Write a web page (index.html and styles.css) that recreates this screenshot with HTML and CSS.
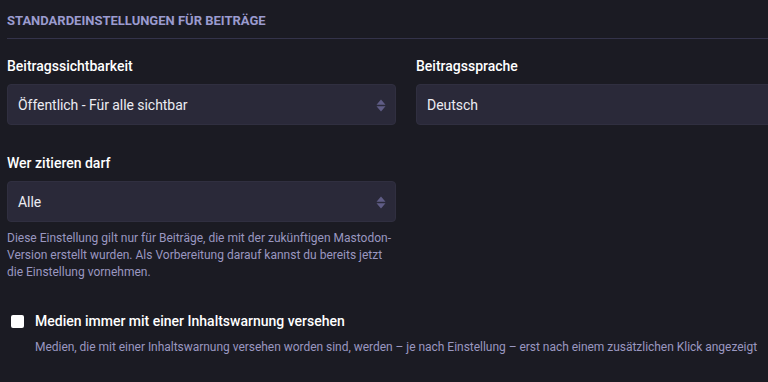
FILE: index.html
```
<!DOCTYPE html>
<html lang="de">
<head>
<meta charset="utf-8">
<link rel="stylesheet" href="styles.css">
</head>
<body>
<div class="page">
  <h4 class="section-title">Standardeinstellungen für Beiträge</h4>
  <div class="fields-row">
    <div class="field">
      <label class="field-label">Beitragssichtbarkeit</label>
      <div class="select">
        <span class="select-value">Öffentlich - Für alle sichtbar</span>
        <svg class="select-arrows" width="10" height="13" viewBox="0 0 10 13"><path d="M5 0.5 L9.5 5.7 H0.5 Z M5 12.5 L9.5 7.3 H0.5 Z" fill="#5f5c85"/></svg>
      </div>
    </div>
    <div class="field">
      <label class="field-label">Beitragssprache</label>
      <div class="select">
        <span class="select-value">Deutsch</span>
        <svg class="select-arrows" width="10" height="13" viewBox="0 0 10 13"><path d="M5 0.5 L9.5 5.7 H0.5 Z M5 12.5 L9.5 7.3 H0.5 Z" fill="#5f5c85"/></svg>
      </div>
    </div>
  </div>
  <div class="fields-row second">
    <div class="field">
      <label class="field-label">Wer zitieren darf</label>
      <div class="select">
        <span class="select-value">Alle</span>
        <svg class="select-arrows" width="10" height="13" viewBox="0 0 10 13"><path d="M5 0.5 L9.5 5.7 H0.5 Z M5 12.5 L9.5 7.3 H0.5 Z" fill="#5f5c85"/></svg>
      </div>
      <p class="hint">Diese Einstellung gilt nur für Beiträge, die mit der zukünftigen Mastodon-Version erstellt wurden. Als Vorbereitung darauf kannst du bereits jetzt die Einstellung vornehmen.</p>
    </div>
    <div class="field"></div>
  </div>
  <div class="check-field">
    <div class="check-line">
      <span class="checkbox"></span>
      <span class="check-label">Medien immer mit einer Inhaltswarnung versehen</span>
    </div>
    <p class="check-hint">Medien, die mit einer Inhaltswarnung versehen worden sind, werden – je nach Einstellung – erst nach einem zusätzlichen Klick angezeigt</p>
  </div>
</div>
</body>
</html>
```
FILE: styles.css
```
html, body {
  margin: 0;
  padding: 0;
  background: #1b1b23;
  overflow: hidden;
}
body {
  font-family: Roboto, "Liberation Sans", sans-serif;
  color: #ffffff;
}
.page {
  width: 798px;
  padding: 12px 0 0 7px;
}
.section-title {
  margin: 0;
  font-size: 13px;
  line-height: 18px;
  font-weight: 700;
  text-transform: uppercase;
  color: #9b9bcf;
  padding-bottom: 8px;
  border-bottom: 1px solid #34334a;
}
.fields-row {
  display: flex;
  gap: 20px;
  margin-top: 17px;
}
.fields-row.second {
  margin-top: 28px;
}
.field {
  flex: 0 0 389px;
  width: 389px;
}
.field-label {
  display: block;
  font-size: 14px;
  line-height: 20px;
  font-weight: 500;
  color: #ffffff;
  margin-bottom: 8px;
}
.select {
  box-sizing: border-box;
  height: 41px;
  display: flex;
  align-items: center;
  justify-content: space-between;
  padding: 0 9px 0 10px;
  background: #2a2939;
  border: 1px solid #302f40;
  border-radius: 4px;
}
.select-value {
  font-size: 14px;
  color: #ececf2;
  letter-spacing: -0.05px;
}
.select-arrows {
  display: block;
  margin-top: 1px;
}
.hint {
  margin: 8px 0 0;
  font-size: 12px;
  line-height: 17px;
  color: #9a97c0;
}
.check-field {
  margin-top: 30px;
  padding-left: 4px;
}
.check-line {
  display: flex;
  align-items: center;
  gap: 11px;
}
.checkbox {
  width: 13px;
  height: 13px;
  background: #ffffff;
  border-radius: 2px;
  flex: 0 0 13px;
}
.check-label {
  font-size: 14px;
  line-height: 20px;
  font-weight: 500;
}
.check-hint {
  margin: 7px 0 0 24px;
  font-size: 12px;
  line-height: 18px;
  color: #9a97c0;
  white-space: nowrap;
  letter-spacing: -0.03px;
}
```
